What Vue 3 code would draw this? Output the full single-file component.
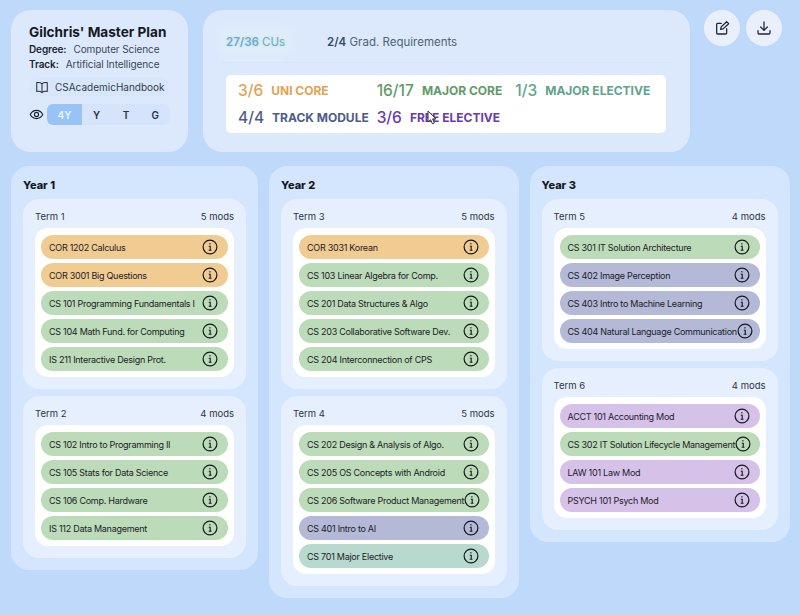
<script setup>
const stats = [
  { n: '3/6', l: 'UNI CORE', c: 'orange' },
  { n: '16/17', l: 'MAJOR CORE', c: 'green' },
  { n: '1/3', l: 'MAJOR ELECTIVE', c: 'teal' },
  { n: '4/4', l: 'TRACK MODULE', c: 'navy' },
  { n: '3/6', l: 'FREE ELECTIVE', c: 'purple' },
]
const years = [
  { name: 'Year 1', terms: [
    { name: 'Term 1', mods: [
      ['COR 1202 Calculus', 'orange'], ['COR 3001 Big Questions', 'orange'],
      ['CS 101 Programming Fundamentals I', 'green'], ['CS 104 Math Fund. for Computing', 'green'],
      ['IS 211 Interactive Design Prot.', 'green'] ] },
    { name: 'Term 2', mods: [
      ['CS 102 Intro to Programming II', 'green'], ['CS 105 Stats for Data Science', 'green'],
      ['CS 106 Comp. Hardware', 'green'], ['IS 112 Data Management', 'green'] ] },
  ] },
  { name: 'Year 2', terms: [
    { name: 'Term 3', mods: [
      ['COR 3031 Korean', 'orange'], ['CS 103 Linear Algebra for Comp.', 'green'],
      ['CS 201 Data Structures & Algo', 'green'], ['CS 203 Collaborative Software Dev.', 'green'],
      ['CS 204 Interconnection of CPS', 'green'] ] },
    { name: 'Term 4', mods: [
      ['CS 202 Design & Analysis of Algo.', 'green'], ['CS 205 OS Concepts with Android', 'green'],
      ['CS 206 Software Product Management', 'green'], ['CS 401 Intro to AI', 'navy'],
      ['CS 701 Major Elective', 'teal'] ] },
  ] },
  { name: 'Year 3', terms: [
    { name: 'Term 5', mods: [
      ['CS 301 IT Solution Architecture', 'green'], ['CS 402 Image Perception', 'navy'],
      ['CS 403 Intro to Machine Learning', 'navy'], ['CS 404 Natural Language Communication', 'navy'] ] },
    { name: 'Term 6', mods: [
      ['ACCT 101 Accounting Mod', 'purple'], ['CS 302 IT Solution Lifecycle Management', 'green'],
      ['LAW 101 Law Mod', 'purple'], ['PSYCH 101 Psych Mod', 'purple'] ] },
  ] },
]
</script>

<template>
  <div class="page">
    <header class="top">
      <section class="profile">
        <h1>Gilchris' Master Plan</h1>
        <p class="meta"><b>Degree:</b><span>Computer Science</span></p>
        <p class="meta"><b>Track:</b><span>Artificial Intelligence</span></p>
        <div class="handbook">
          <svg width="14" height="14" viewBox="0 0 24 24" fill="none" stroke="#2b3240" stroke-width="1.8" stroke-linejoin="round">
            <path d="M12 6.500C10 4.500 6.500 4 3 4.500V19.500C6.500 19 10 19.500 12 21.500C14 19.500 17.500 19 21 19.500V4.500C17.500 4 14 4.500 12 6.500Z" />
            <path d="M12 6.500V21.500" />
          </svg>
          <span>CSAcademicHandbook</span>
        </div>
        <div class="views">
          <svg width="15" height="15" viewBox="0 0 24 24" fill="none" stroke="#1c2430" stroke-width="1.900">
            <path d="M2 12C4.500 7.500 8 5.500 12 5.500S19.500 7.500 22 12C19.500 16.500 16 18.500 12 18.500S4.500 16.500 2 12Z" />
            <circle cx="12" cy="12" r="3.300" />
          </svg>
          <div class="segments">
            <span class="seg active">4Y</span>
            <span class="seg">Y</span>
            <span class="seg">T</span>
            <span class="seg">G</span>
          </div>
        </div>
      </section>

      <section class="progress">
        <div class="tabs">
          <span class="tab current"><b>27/36</b> CUs</span>
          <span class="tab"><b>2/4</b> Grad. Requirements</span>
        </div>
        <div class="stats">
          <div v-for="s in stats" :key="s.l" class="stat" :class="s.c">
            <span class="num">{{ s.n }}</span>
            <span class="label">{{ s.l }}</span>
          </div>
          <svg class="cursor" width="11" height="15" viewBox="0 0 11 15">
            <path d="M1 1V12L3.600 9.700L5.400 13.800L7.400 12.900L5.600 8.900H9Z" fill="#fff" stroke="#333" stroke-width="1" stroke-linejoin="round" />
          </svg>
        </div>
      </section>

      <div class="actions">
        <button class="round" aria-label="Edit">
          <svg width="16" height="16" viewBox="0 0 24 24" fill="none" stroke="#20242c" stroke-width="1.900" stroke-linecap="round" stroke-linejoin="round">
            <path d="M11 5H5.500A1.500 1.500 0 0 0 4 6.500V19.500A1.500 1.500 0 0 0 5.500 21H17.500A1.500 1.500 0 0 0 19 19.500V13" />
            <path d="M10 14L10.800 10.300L19 2.500L22 5.500L13.700 13.300Z" />
          </svg>
        </button>
        <button class="round" aria-label="Download">
          <svg width="16" height="16" viewBox="0 0 24 24" fill="none" stroke="#20242c" stroke-width="1.900" stroke-linecap="round" stroke-linejoin="round">
            <path d="M12 3V15" />
            <path d="M7 10.500L12 15.500L17 10.500" />
            <path d="M3 16V19.500A1.500 1.500 0 0 0 4.500 21H19.500A1.500 1.500 0 0 0 21 19.500V16" />
          </svg>
        </button>
      </div>
    </header>

    <main class="years">
      <section v-for="y in years" :key="y.name" class="year">
        <h2>{{ y.name }}</h2>
        <div class="terms">
          <article v-for="t in y.terms" :key="t.name" class="term">
            <div class="term-head">
              <span>{{ t.name }}</span>
              <span>{{ t.mods.length }} mods</span>
            </div>
            <ul class="mods">
              <li v-for="m in t.mods" :key="m[0]" class="mod" :class="m[1]">
                <span class="mod-name">{{ m[0] }}</span>
                <svg class="info" width="16" height="16" viewBox="0 0 16 16" fill="none" stroke="#14181f">
                  <circle cx="8" cy="8" r="6.900" stroke-width="1.200" />
                  <path d="M6.800 7.300H8.200V11.200M6.700 11.300H9.500" stroke-width="1.100" />
                  <path d="M7.400 4.700H8.400" stroke-width="1.400" />
                </svg>
              </li>
            </ul>
          </article>
        </div>
      </section>
    </main>
  </div>
</template>

<style>
html, body { margin: 0; background: #bfd9fa; }
</style>

<style scoped>
.page {
  width: 800px;
  height: 615px;
  overflow: hidden;
  box-sizing: border-box;
  padding: 10px 0 0 11px;
  background: #bfd9fa;
  font-family: Inter, "Liberation Sans", sans-serif;
  color: #20242c;
}
.top { display: flex; align-items: flex-start; }
.profile {
  width: 177px;
  height: 142px;
  box-sizing: border-box;
  padding: 14px 18px 0 18px;
  border-radius: 20px;
  background: #dce9fd;
}
h1 { margin: 0 0 2px; font-size: 13.600px; line-height: 16px; font-weight: 700; color: #16191f; white-space: nowrap; }
.meta { display: flex; gap: 7px; margin: 0; font-size: 10px; line-height: 15px; color: #3c4656; white-space: nowrap; letter-spacing: -0.1px; }
.meta b { color: #20242c; font-weight: 600; }
.handbook {
  display: flex;
  align-items: center;
  gap: 6px;
  width: 138px;
  height: 19px;
  margin: 5px 0 0 1px;
  padding-left: 5px;
  box-sizing: border-box;
  border-radius: 6px;
  background: #d8e6fc;
  font-size: 10px;
  color: #333c4b;
}
.views { display: flex; align-items: center; gap: 3px; margin-top: 8px; }
.segments { display: flex; width: 123px; height: 21px; border-radius: 6px; background: #d5e4fb; }
.seg { flex: 1; display: flex; align-items: center; justify-content: center; font-size: 10px; font-weight: 600; color: #2a3240; }
.seg.active { flex: 0 0 35px; border-radius: 6px 0 0 6px; background: #98c4f5; color: #eaf3fe; }

.progress {
  width: 487px;
  height: 142px;
  margin-left: 15px;
  box-sizing: border-box;
  padding: 15px 24px 0 23px;
  border-radius: 20px;
  background: #dce9fd;
}
.tabs {
  display: flex;
  align-items: center;
  gap: 42px;
  height: 38px;
  box-sizing: border-box;
  padding-bottom: 4px;
  margin: 0 -4px;
  border-bottom: 1px dotted #dcdff0;
  font-size: 11.500px;
  color: #506278;
}
.tab { white-space: nowrap; }
.tab b { font-weight: 600; color: #34496b; }
.tab.current {
  color: #6da7e8;
  margin-left: 4px;
  padding: 0;
  background: #e0edfb;
  box-shadow: 0 0 8px 6px #e0edfb;
  text-shadow: 0 0 3px #b9e69b;
}
.tab.current b { color: #6da7e8; }
.stats {
  position: relative;
  display: grid;
  grid-template-columns: repeat(3, 1fr);
  grid-auto-rows: 27px;
  align-items: center;
  width: 440px;
  height: 58px;
  margin-top: 12px;
  padding: 2px 12px 2px;
  box-sizing: border-box;
  border-radius: 5px;
  background: #fff;
}
.stat { display: flex; align-items: center; gap: 8px; white-space: nowrap; }
.num { font-size: 15.500px; font-weight: 500; }
.label { font-size: 12px; font-weight: 700; }
.stat.orange { color: #e2a352; }
.stat.green { color: #5f9a67; }
.stat.teal { color: #5ea48b; }
.stat.navy { color: #4e5b8d; }
.stat.purple { color: #6c3bab; }
.cursor { position: absolute; left: 201px; top: 35px; }

.actions { display: flex; gap: 6px; margin-left: 14px; }
.round {
  display: flex;
  align-items: center;
  justify-content: center;
  width: 36px;
  height: 36px;
  padding: 0;
  border: 0;
  border-radius: 50%;
  background: #e9f0fc;
}

.years {
  display: grid;
  grid-template-columns: 247px 249.500px 260px;
  align-items: start;
  column-gap: 11px;
  margin-top: 14px;
}
.year {
  box-sizing: border-box;
  padding: 12px;
  border-radius: 18px;
  background: #d4e5fe;
}
h2 { margin: 0 0 7px; font-size: 11px; line-height: 14px; font-weight: 800; color: #14171d; }
.terms { display: flex; flex-direction: column; gap: 7px; }
.term { padding: 0 12px 12px; border-radius: 16px; background: #e6effe; }
.term-head {
  display: flex;
  justify-content: space-between;
  align-items: center;
  height: 29px;
  padding-top: 5px;
  box-sizing: border-box;
  font-size: 9.500px;
  color: #2e3440;
}
.mods {
  display: flex;
  flex-direction: column;
  gap: 4px;
  margin: 0;
  padding: 7px 6px 6px;
  list-style: none;
  border-radius: 13px;
  background: #fff;
}
.mod {
  display: flex;
  align-items: center;
  justify-content: space-between;
  height: 24px;
  box-sizing: border-box;
  padding: 0 10px 0 8px;
  border-radius: 12px;
  font-size: 9px;
  letter-spacing: -0.27px;
  color: #1c2128;
  white-space: nowrap;
}
.mod.orange { background: #f0cc92; }
.mod.green { background: #bcdbb8; }
.mod.navy { background: #b3b9d6; }
.mod.teal { background: #b8dace; }
.mod.purple { background: #d6c1e8; }
.info { flex: none; }
</style>
